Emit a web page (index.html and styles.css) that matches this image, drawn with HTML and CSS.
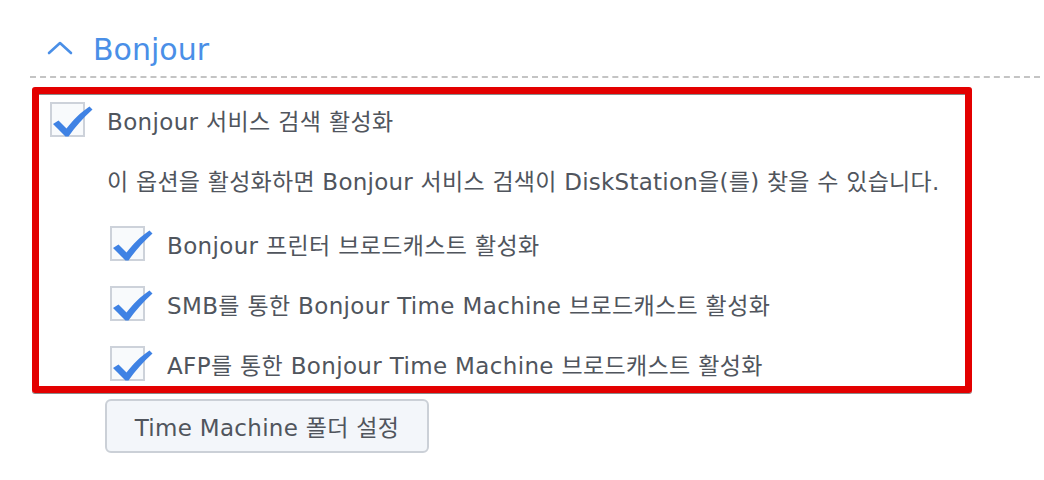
FILE: index.html
```html
<!DOCTYPE html>
<html lang="ko">
<head>
<meta charset="utf-8">
<link rel="stylesheet" href="styles.css">
</head>
<body>
<div class="page">
  <div class="section-head">
    <svg class="chevron" width="26" height="14" viewBox="0 0 26 14"><polyline points="2,12 13,2 24,12" fill="none" stroke="#4a8fe7" stroke-width="2.6" stroke-linecap="round" stroke-linejoin="round"/></svg>
    <span class="title">Bonjour</span>
  </div>
  <div class="divider"></div>
  <div class="highlight">
    <div class="row">
      <span class="cb"><svg class="check" width="46" height="36" viewBox="0 0 46 36"><path d="M3 20 L8.5 16.5 L16.5 24.5 C23 16 30 9 39.5 2.5 L42.5 5.5 C33 14 25 23 18.5 32.5 L15.5 32.5 Z" fill="#3f82e4"/></svg></span>
      <span class="label">Bonjour 서비스 검색 활성화</span>
    </div>
    <p class="desc">이 옵션을 활성화하면 Bonjour 서비스 검색이 DiskStation을(를) 찾을 수 있습니다.</p>
    <div class="row sub first">
      <span class="cb"><svg class="check" width="46" height="36" viewBox="0 0 46 36"><path d="M3 20 L8.5 16.5 L16.5 24.5 C23 16 30 9 39.5 2.5 L42.5 5.5 C33 14 25 23 18.5 32.5 L15.5 32.5 Z" fill="#3f82e4"/></svg></span>
      <span class="label">Bonjour 프린터 브로드캐스트 활성화</span>
    </div>
    <div class="row sub">
      <span class="cb"><svg class="check" width="46" height="36" viewBox="0 0 46 36"><path d="M3 20 L8.5 16.5 L16.5 24.5 C23 16 30 9 39.5 2.5 L42.5 5.5 C33 14 25 23 18.5 32.5 L15.5 32.5 Z" fill="#3f82e4"/></svg></span>
      <span class="label">SMB를 통한 Bonjour Time Machine 브로드캐스트 활성화</span>
    </div>
    <div class="row sub">
      <span class="cb"><svg class="check" width="46" height="36" viewBox="0 0 46 36"><path d="M3 20 L8.5 16.5 L16.5 24.5 C23 16 30 9 39.5 2.5 L42.5 5.5 C33 14 25 23 18.5 32.5 L15.5 32.5 Z" fill="#3f82e4"/></svg></span>
      <span class="label">AFP를 통한 Bonjour Time Machine 브로드캐스트 활성화</span>
    </div>
  </div>
  <button class="btn">Time Machine 폴더 설정</button>
</div>
</body>
</html>
```
FILE: styles.css
```css
html, body {
  margin: 0;
  padding: 0;
  background: #ffffff;
}
.page {
  font-family: "DejaVu Sans", "Noto Sans CJK KR", sans-serif;
  color: #50555d;
  padding: 32px 0 0 0;
}
.section-head {
  display: flex;
  align-items: center;
  height: 36px;
  padding-left: 47px;
}
.chevron {
  display: block;
  margin-top: -4px;
}
.title {
  margin-left: 20px;
  font-size: 30px;
  color: #4a8fe7;
  line-height: 36px;
}
.divider {
  margin: 8px 4px 0 30px;
  border-top: 2px dashed #c4c4c4;
  height: 0;
}
.highlight {
  margin: 9px 0 0 32px;
  width: 915px;
  border: 7px solid #e30000;
  border-radius: 3px;
  padding: 8px 0 5px 11px;
  box-shadow: 0 1px 0 #8a8a8a, inset 0 1px 0 #8a8a8a;
}
.row {
  display: flex;
  align-items: center;
  height: 35px;
}
.cb {
  position: relative;
  box-sizing: border-box;
  width: 35px;
  height: 35px;
  border: 2px solid #cdd2da;
  background: #f8fafc;
  flex: none;
}
.check {
  position: absolute;
  left: -2px;
  top: 0px;
  overflow: visible;
}
.label {
  margin-left: 22px;
  font-size: 23px;
  letter-spacing: 0.35px;
  white-space: nowrap;
}
.desc {
  margin: 30px 0 0 57px;
  font-size: 23px;
  letter-spacing: 0.25px;
  line-height: 30px;
  white-space: nowrap;
}
.sub {
  margin-left: 60px;
  margin-top: 25px;
}
.sub.first {
  margin-top: 29px;
}
.btn {
  display: block;
  margin: 6px 0 0 105px;
  width: 324px;
  height: 54px;
  box-sizing: border-box;
  border: 2px solid #cbd0d7;
  border-radius: 6px;
  background: #f3f6fa;
  font-family: "DejaVu Sans", "Noto Sans CJK KR", sans-serif;
  font-size: 23px;
  letter-spacing: 0.3px;
  color: #50555d;
  padding: 0;
}
```
